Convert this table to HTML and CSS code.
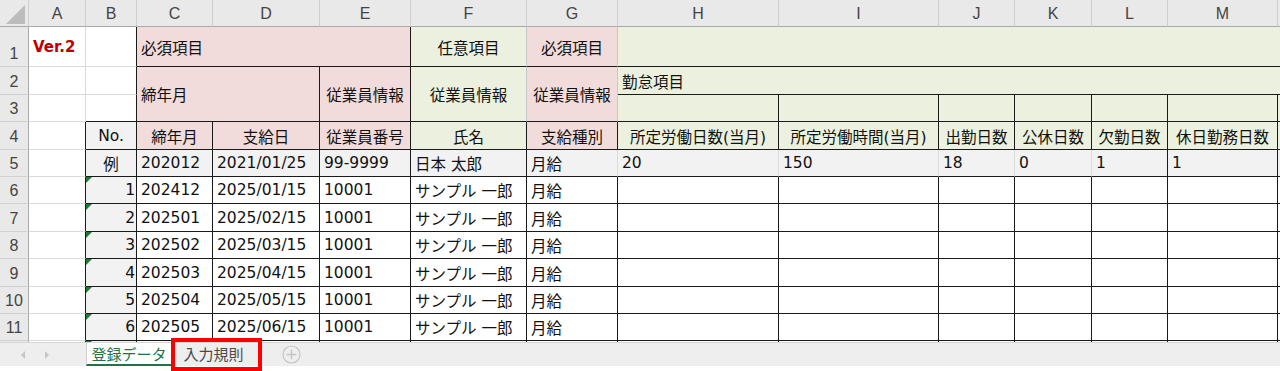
FILE: index.html
```html
<!DOCTYPE html>
<html lang="ja">
<head>
<meta charset="utf-8">
<title>登録データ</title>
<link rel="stylesheet" href="styles.css">
</head>
<body>
<div class="sheet">
  <div class="grid">
    <!-- column headers -->
    <div class="ch corner"><span class="tri"></span></div>
    <div class="ch">A</div><div class="ch">B</div><div class="ch">C</div><div class="ch">D</div>
    <div class="ch">E</div><div class="ch">F</div><div class="ch">G</div><div class="ch">H</div>
    <div class="ch">I</div><div class="ch">J</div><div class="ch">K</div><div class="ch">L</div>
    <div class="ch">M</div><div class="ch"></div>

    <!-- row 1 -->
    <div class="rh">1</div>
    <div class="c ver">Ver.2</div>
    <div class="c br"></div>
    <div class="c pk br bb s3">必須項目</div>
    <div class="c gr ctr bb">任意項目</div>
    <div class="c pk ctr bb">必須項目</div>
    <div class="c gr bb s7"></div>

    <!-- row 2 -->
    <div class="rh">2</div>
    <div class="c"></div>
    <div class="c br"></div>
    <div class="c pk br bb s2 r2">締年月</div>
    <div class="c pk ctr br bb r2">従業員情報</div>
    <div class="c gr ctr bb r2">従業員情報</div>
    <div class="c pk ctr bb r2">従業員情報</div>
    <div class="c gr bb s7">勤怠項目</div>

    <!-- row 3 -->
    <div class="rh">3</div>
    <div class="c"></div>
    <div class="c br bb"></div>
    <div class="c gr br bb"></div><div class="c gr br bb"></div><div class="c gr br bb"></div>
    <div class="c gr br bb"></div><div class="c gr br bb"></div><div class="c gr br bb"></div>
    <div class="c gr bb"></div>

    <!-- row 4 -->
    <div class="rh">4</div>
    <div class="c br"></div>
    <div class="c ex ctr br bb">No.</div>
    <div class="c pk ctr br bb">締年月</div>
    <div class="c pk ctr br bb">支給日</div>
    <div class="c pk ctr br bb">従業員番号</div>
    <div class="c gr ctr br bb">氏名</div>
    <div class="c pk ctr br bb">支給種別</div>
    <div class="c gr ctr br bb">所定労働日数(当月)</div>
    <div class="c gr ctr br bb">所定労働時間(当月)</div>
    <div class="c gr ctr br bb">出勤日数</div>
    <div class="c gr ctr br bb">公休日数</div>
    <div class="c gr ctr br bb">欠勤日数</div>
    <div class="c gr ctr br bb">休日勤務日数</div>
    <div class="c gr bb"></div>

    <!-- row 5 example -->
    <div class="rh">5</div>
    <div class="c br"></div>
    <div class="c ex ctr br bb">例</div>
    <div class="c ex br bb">202012</div>
    <div class="c ex br bb">2021/01/25</div>
    <div class="c ex br bb">99-9999</div>
    <div class="c ex br bb">日本 太郎</div>
    <div class="c ex lt bb">月給</div>
    <div class="c ex lt bb">20</div>
    <div class="c ex lt bb">150</div>
    <div class="c ex lt bb">18</div>
    <div class="c ex lt bb">0</div>
    <div class="c ex br bb">1</div>
    <div class="c ex br bb">1</div>
    <div class="c ex bb"></div>

    <!-- rows 6-11 -->
    <div class="rh">6</div>
    <div class="c br"></div>
    <div class="c ex rgt br bb flag">1</div>
    <div class="c br bb">202412</div><div class="c br bb">2025/01/15</div><div class="c br bb">10001</div>
    <div class="c br bb">サンプル 一郎</div><div class="c br bb">月給</div>
    <div class="c br bb"></div><div class="c br bb"></div><div class="c br bb"></div><div class="c br bb"></div>
    <div class="c br bb"></div><div class="c br bb"></div><div class="c bb"></div>

    <div class="rh">7</div>
    <div class="c br"></div>
    <div class="c ex rgt br bb flag">2</div>
    <div class="c br bb">202501</div><div class="c br bb">2025/02/15</div><div class="c br bb">10001</div>
    <div class="c br bb">サンプル 一郎</div><div class="c br bb">月給</div>
    <div class="c br bb"></div><div class="c br bb"></div><div class="c br bb"></div><div class="c br bb"></div>
    <div class="c br bb"></div><div class="c br bb"></div><div class="c bb"></div>

    <div class="rh">8</div>
    <div class="c br"></div>
    <div class="c ex rgt br bb flag">3</div>
    <div class="c br bb">202502</div><div class="c br bb">2025/03/15</div><div class="c br bb">10001</div>
    <div class="c br bb">サンプル 一郎</div><div class="c br bb">月給</div>
    <div class="c br bb"></div><div class="c br bb"></div><div class="c br bb"></div><div class="c br bb"></div>
    <div class="c br bb"></div><div class="c br bb"></div><div class="c bb"></div>

    <div class="rh">9</div>
    <div class="c br"></div>
    <div class="c ex rgt br bb flag">4</div>
    <div class="c br bb">202503</div><div class="c br bb">2025/04/15</div><div class="c br bb">10001</div>
    <div class="c br bb">サンプル 一郎</div><div class="c br bb">月給</div>
    <div class="c br bb"></div><div class="c br bb"></div><div class="c br bb"></div><div class="c br bb"></div>
    <div class="c br bb"></div><div class="c br bb"></div><div class="c bb"></div>

    <div class="rh">10</div>
    <div class="c br"></div>
    <div class="c ex rgt br bb flag">5</div>
    <div class="c br bb">202504</div><div class="c br bb">2025/05/15</div><div class="c br bb">10001</div>
    <div class="c br bb">サンプル 一郎</div><div class="c br bb">月給</div>
    <div class="c br bb"></div><div class="c br bb"></div><div class="c br bb"></div><div class="c br bb"></div>
    <div class="c br bb"></div><div class="c br bb"></div><div class="c bb"></div>

    <div class="rh">11</div>
    <div class="c br"></div>
    <div class="c ex rgt br bb flag">6</div>
    <div class="c br bb">202505</div><div class="c br bb">2025/06/15</div><div class="c br bb">10001</div>
    <div class="c br bb">サンプル 一郎</div><div class="c br bb">月給</div>
    <div class="c br bb"></div><div class="c br bb"></div><div class="c br bb"></div><div class="c br bb"></div>
    <div class="c br bb"></div><div class="c br bb"></div><div class="c bb"></div>

    <div class="rh"></div>
    <div class="c br"></div>
    <div class="c ex rgt br bb flag"></div>
    <div class="c br bb"></div><div class="c br bb"></div><div class="c br bb"></div>
    <div class="c br bb"></div><div class="c br bb"></div>
    <div class="c br bb"></div><div class="c br bb"></div><div class="c br bb"></div><div class="c br bb"></div>
    <div class="c br bb"></div><div class="c br bb"></div><div class="c bb"></div>
  </div>
</div>

<div class="tabbar">
  <div class="nav">
    <span class="arrow left"></span>
    <span class="arrow right"></span>
  </div>
  <div class="tab active">登録データ</div>
  <div class="tab">入力規則</div>
  <div class="add">
    <svg width="19" height="19" viewBox="0 0 19 19" aria-hidden="true">
      <circle cx="9.5" cy="9.5" r="8.5" fill="none" stroke="#c4c4c4" stroke-width="1.2"/>
      <path d="M9.5 4.8v9.4M4.8 9.5h9.4" stroke="#c4c4c4" stroke-width="1.3"/>
    </svg>
  </div>
</div>
<div class="highlight"></div>
</body>
</html>
```

FILE: styles.css
```css
* {
  box-sizing: border-box;
  margin: 0;
  padding: 0;
}

html, body {
  width: 1280px;
  height: 371px;
  overflow: hidden;
  background: #ffffff;
}

body {
  position: relative;
  font-family: "DejaVu Sans", "Noto Sans CJK JP", sans-serif;
  font-size: 15.5px;
  color: #111111;
}

.sheet {
  height: 342px;
  overflow: hidden;
}

.grid {
  display: grid;
  grid-template-columns: 29px 57px 51px 76px 107px 91px 116px 91px 161px 160px 76px 77px 76px 110px 80px;
  grid-template-rows: 27px 40px 28px 27px 28px 27px 27px 28px 27px 28px 27px 27px 27px;
}

/* column header */
.ch {
  display: flex;
  align-items: center;
  justify-content: center;
  background: #e9e9e9;
  border-right: 1px solid #cfcfcf;
  border-bottom: 1px solid #a9a9a9;
  color: #444444;
  font-family: "Liberation Sans", "Noto Sans", sans-serif;
  font-size: 16px;
  padding-top: 1px;
}

.corner {
  align-items: flex-end;
  justify-content: flex-end;
  padding: 0 3px 2px 0;
}

.tri {
  width: 0;
  height: 0;
  border-left: 19px solid transparent;
  border-bottom: 19px solid #bcbcbc;
}

/* row header */
.rh {
  display: flex;
  align-items: flex-end;
  justify-content: center;
  padding-bottom: 3px;
  background: #e9e9e9;
  border-right: 1px solid #a9a9a9;
  border-bottom: 1px solid #d2d2d2;
  color: #444444;
  font-family: "Liberation Sans", "Noto Sans", sans-serif;
  font-size: 16px;
}

/* cells */
.c {
  position: relative;
  display: flex;
  align-items: center;
  padding: 0 4px;
  white-space: nowrap;
  overflow: hidden;
  border-right: 1px solid #dadada;
  border-bottom: 1px solid #dadada;
}

.ctr { justify-content: center; }
.rgt { justify-content: flex-end; padding-right: 1px; }

.br { border-right-color: #1a1a1a; }
.bb { border-bottom-color: #1a1a1a; }
.lt { border-right-color: #dcdcdc; }

.pk { background: #f2dcdb; }
.gr { background: #ebf1de; }
.ex { background: #f2f2f2; }

.pk.ctr:not(.br), .gr.ctr:not(.br) { border-right-color: #c8c8c8; }

.s2 { grid-column: span 2; }
.s3 { grid-column: span 3; }
.s7 { grid-column: span 7; }
.r2 { grid-row: span 2; }

.ver {
  color: #c00000;
  font-weight: bold;
  font-size: 15px;
}

.flag::before {
  content: "";
  position: absolute;
  left: 0;
  top: 0;
  border-top: 6px solid #1d7a35;
  border-right: 6px solid transparent;
}

/* sheet tabs */
.tabbar {
  display: flex;
  align-items: stretch;
  height: 24px;
  background: #eeeeee;
  border-top: 1px solid #d6d6d6;
  font-family: "Noto Sans CJK JP", sans-serif;
  font-size: 15px;
}

.nav {
  width: 86px;
  display: flex;
  align-items: center;
  padding-left: 21px;
  gap: 20px;
}

.arrow {
  width: 0;
  height: 0;
  border-top: 4px solid transparent;
  border-bottom: 4px solid transparent;
}

.arrow.left { border-right: 4px solid #c6c6c6; }
.arrow.right { border-left: 4px solid #c6c6c6; }

.tab {
  width: 85px;
  display: flex;
  align-items: center;
  justify-content: center;
  color: #4a4a4a;
  padding-bottom: 2px;
  white-space: nowrap;
}

.tab.active {
  background: #ffffff;
  color: #217346;
  border-left: 1px solid #cfcfcf;
  border-bottom: 2px solid #217346;
  padding-bottom: 0;
}

.add {
  display: flex;
  align-items: center;
  margin-left: 26px;
}

.highlight {
  position: absolute;
  left: 171px;
  top: 338px;
  width: 91px;
  height: 33px;
  border: 4px solid #ff0000;
}
```
